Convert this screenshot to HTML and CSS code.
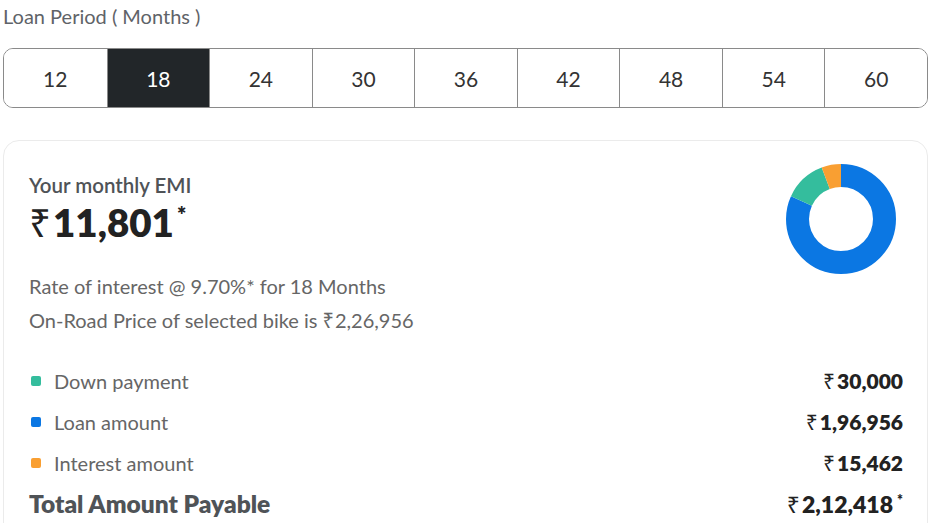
FILE: index.html
```html
<!DOCTYPE html>
<html lang="en">
<head>
<meta charset="UTF-8">
<meta name="viewport" content="width=device-width, initial-scale=1.0">
<title>EMI Calculator</title>
  <link rel="stylesheet" href="styles.css">
</head>

<body>
  <div class="emi-wrap">
    <p class="period-label">Loan Period ( Months )</p>

    <div class="period-group">
      <button class="period-btn">12</button>
      <button class="period-btn active">18</button>
      <button class="period-btn">24</button>
      <button class="period-btn">30</button>
      <button class="period-btn">36</button>
      <button class="period-btn">42</button>
      <button class="period-btn">48</button>
      <button class="period-btn">54</button>
      <button class="period-btn">60</button>
    </div>

    <div class="emi-card">
      <div class="emi-head">
        <div>
          <p class="emi-title">Your monthly EMI</p>
          <p class="emi-value"><span class="rupee">₹</span>11,801<sup>*</sup></p>
          <p class="emi-info first">Rate of interest @ 9.70%* for 18 Months</p>
          <p class="emi-info">On-Road Price of selected bike is<span class="rupee">₹</span>2,26,956</p>
        </div>
        <!-- donut: loan, down payment, interest (clockwise from top) -->
        <svg class="donut" width="110" height="110" viewBox="0 0 110 110">
          <g transform="rotate(-90 55 55)">
            <circle cx="55" cy="55" r="43.5" fill="none" stroke="#0b77e3" stroke-width="23"
              stroke-dasharray="223.3 500" />
            <circle cx="55" cy="55" r="43.5" fill="none" stroke="#34bd9d" stroke-width="23"
              stroke-dasharray="0 223.3 34 500" />
            <circle cx="55" cy="55" r="43.5" fill="none" stroke="#f99f32" stroke-width="23"
              stroke-dasharray="0 257.3 17.9 500" />
          </g>
        </svg>
      </div>

      <ul class="breakup">
        <li><span class="dot teal"></span><span class="name">Down payment</span><span class="amt"><span class="rupee">₹</span>30,000</span></li>
        <li><span class="dot blue"></span><span class="name">Loan amount</span><span class="amt"><span class="rupee">₹</span>1,96,956</span></li>
        <li><span class="dot orange"></span><span class="name">Interest amount</span><span class="amt"><span class="rupee">₹</span>15,462</span></li>
        <li class="total"><span class="name">Total Amount Payable</span><span class="amt"><span class="rupee">₹</span>2,12,418<sup>*</sup></span></li>
      </ul>
    </div>
  </div>
</body>
</html>
```

FILE: styles.css
```css
body {
  margin: 0;
  font-family: Lato, 'Noto Sans', sans-serif;
  background-color: #fff;
  overflow: hidden;
}

.emi-wrap {
  padding: 0 2px 0 3px;
}

.period-label {
  margin: 4px 0 0 0;
  font-size: 20px;
  line-height: 24px;
  color: #5f6368;
}

.period-group {
  display: grid;
  grid-template-columns: repeat(9, 1fr);
  margin-top: 20px;
  height: 58px;
  border: 1px solid #8a8a8a;
  border-radius: 10px;
  overflow: hidden;
}

.period-btn {
  font-family: inherit;
  font-size: 21px;
  color: #333;
  background: #fff;
  border: none;
  border-left: 1px solid #8a8a8a;
  padding: 0;
}

.period-btn:first-child {
  border-left: none;
}

.period-btn.active {
  background-color: #222629;
  color: #fff;
}

.emi-card {
  margin-top: 32px;
  border: 1px solid #ebebeb;
  border-radius: 16px;
  padding: 23px 24px 0 25px;
  height: 400px;
  box-sizing: border-box;
}

.emi-head {
  display: flex;
  justify-content: space-between;
  align-items: flex-start;
}

.emi-title {
  margin: 9px 0 0 0;
  font-size: 20.5px;
  line-height: 24px;
  font-weight: 600;
  color: #4f5357;
}

.emi-value {
  margin: 3px 0 0 0;
  font-size: 38.5px;
  font-weight: 800;
  color: #222;
  line-height: 44px;
}

.emi-value sup {
  font-size: 22px;
  line-height: 0;
  vertical-align: 14px;
  margin-left: 3px;
}

.rupee {
  font-family: 'Noto Sans', sans-serif;
  font-weight: 400;
  margin-right: 2px;
}

.emi-info .rupee {
  margin-left: 5px;
  margin-right: 1px;
}

.donut {
  margin-right: 7px;
}

.emi-info {
  margin: 0;
  font-size: 20px;
  line-height: 34px;
  color: #666;
}

.emi-info.first {
  margin-top: 25px;
}

.breakup {
  list-style: none;
  margin: 22px 0 0 0;
  padding: 0;
}

.breakup li {
  display: flex;
  align-items: center;
  height: 41px;
  font-size: 20px;
  color: #666;
}

.breakup .name {
  flex: 1;
}

.dot {
  width: 10px;
  height: 10px;
  border-radius: 2px;
  margin: 0 13px 0 2px;
}

.dot.teal { background-color: #34bd9d; }
.dot.blue { background-color: #0b77e3; }
.dot.orange { background-color: #f99f32; }

.amt {
  font-weight: 800;
  font-size: 21px;
  color: #222;
}

.breakup li.total {
  font-size: 24.5px;
  font-weight: 800;
  color: #4f5357;
}

.breakup li.total .amt {
  font-size: 23px;
  color: #222;
}

.amt sup {
  font-size: 14px;
  line-height: 0;
  vertical-align: 8px;
  margin-left: 4px;
}
```
